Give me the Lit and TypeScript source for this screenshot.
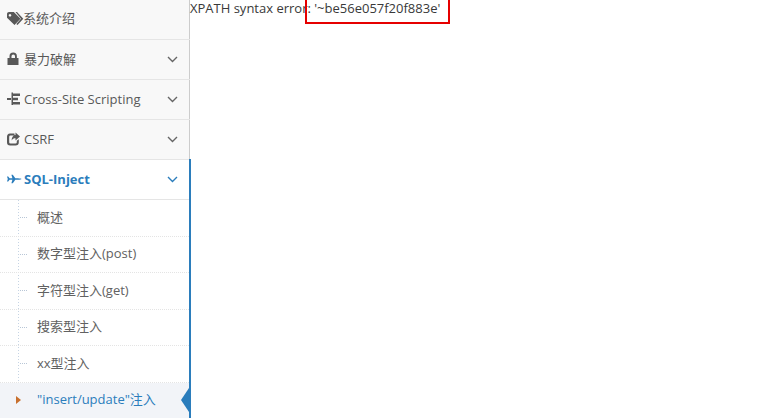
import { LitElement, html, css, svg } from "lit";
import { customElement } from "lit/decorators.js";

const icons: Record<string, unknown> = {
  tag: svg`<path d="M0 2C0 .9.9 0 2 0H6.800L13.500 6.800 7.500 13 0 5.800ZM3 2a1.300 1.300 0 1 0 .01 0Z" fill-rule="evenodd"/><path d="M8.500 0H10L16.300 6.800 10.500 13 9.300 12 14 6.800Z"/>`,
  lock: svg`<path d="M2.500 6V4.300a3.700 3.700 0 0 1 7.400 0V6h1.600V13H.5V6ZM4.500 6H8V4.300a1.750 1.750 0 0 0-3.500 0Z" fill-rule="evenodd"/>`,
  sitemap: svg`<path d="M0 6H4V8H0ZM4.500 .5H6V13H4.500ZM6 1.500H13V4H6ZM6 5.700H11V8.300H6ZM6 10H13V12.500H6Z"/>`,
  share: svg`<path d="M3 1.500H7.500V3.500H3.500A1.300 1.300 0 0 0 2.200 4.800V10.200A1.300 1.300 0 0 0 3.500 11.500H8.500A1.300 1.300 0 0 0 9.800 10.200V8.800L11.800 7.200V10.200A3.300 3.300 0 0 1 8.500 13.500H3.500A3.300 3.300 0 0 1 0 10.200V4.800A3.300 3.300 0 0 1 3 1.500ZM8.500 .5L13 4.500 8.500 8.500V6.300C6.800 6.300 5.500 6.800 4.600 8.500 4.600 5.500 6 3.200 8.500 2.900Z"/>`,
  jet: svg`<path d="M0 4.500H1.200L2.600 6.200H5.400L4.400 2.800H5.800L8.300 6.200H11C12.800 6.300 14.500 6.800 14.500 7S12.800 7.700 11 7.800H8.300L5.800 11.200H4.400L5.400 7.800H2.600L1.200 9.500H0L.8 7Z"/>`,
};

const chevron = html`<svg class="chev" viewBox="0 0 11 7" width="11" height="7"><path d="M1 1l4.500 4.500L10 1" fill="none" stroke="currentColor" stroke-width="1.400"/></svg>`;

const tops = [
  { icon: "tag", label: "系统介绍", chev: false, cls: "up2" },
  { icon: "lock", label: "暴力破解", chev: true, cls: "up1" },
  { icon: "sitemap", label: "Cross-Site Scripting", chev: true, cls: "" },
  { icon: "share", label: "CSRF", chev: true, cls: "" },
];
const subs = ["概述", "数字型注入(post)", "字符型注入(get)", "搜索型注入", "xx型注入"];

@customElement("app-root")
export class AppRoot extends LitElement {
  static styles = css`
    :host {
      display: flex;
      width: 779px;
      height: 418px;
      overflow: hidden;
      background: #fff;
      font-family: "Open Sans", "Noto Sans CJK SC", sans-serif;
      font-size: 13px;
      color: #393939;
    }
    .side {
      width: 190px;
      flex: none;
      height: 418px;
      box-sizing: border-box;
      background: #f8f8f8;
      border-right: 1px solid #ccc;
      display: flex;
      flex-direction: column;
    }
    .row {
      display: flex;
      align-items: center;
      box-sizing: border-box;
      height: 40px;
      flex: none;
      padding: 0 12px 1px 7px;
      color: #585858;
      border-bottom: 1px solid #e5e5e5;
      margin-right: -1px;
    }
    .ico { width: 17px; height: 14px; flex: none; fill: #585858; overflow: visible; }
    .row .label { flex: 1; white-space: nowrap; }
    .label.up1 { padding-bottom: 2px; }
    .label.up2 { padding-bottom: 4px; margin-left: -1px; }
    .chev { color: #666; flex: none; }
    .row.open {
      position: relative;
      background: #fff;
      color: #2b7dbc;
      font-weight: 700;
      margin-right: -2px;
      padding-right: 13px;
    }
    .row.open::after {
      content: "";
      position: absolute;
      right: 0;
      top: -1px;
      bottom: -1px;
      width: 2px;
      background: #2b7dbc;
    }
    .row.open .ico { fill: #2b7dbc; }
    .row.open .chev { color: #2b7dbc; }
    .subs {
      flex: 1;
      background-color: #fff;
      margin-right: -2px;
      border-right: 2px solid #2b7dbc;
      position: relative;
      background-image: linear-gradient(#c6d4e4 50%, transparent 50%);
      background-size: 1px 3px;
      background-repeat: repeat-y;
      background-position: 18px 0;
    }
    .sub {
      position: relative;
      height: 36.5px;
      box-sizing: border-box;
      display: flex;
      align-items: center;
      padding: 0 0 3px 37px;
      color: #616161;
      white-space: nowrap;
      border-bottom: 1px dotted #e4e4e4;
    }
    .sub::before {
      content: "";
      position: absolute;
      left: 20px;
      top: 17px;
      width: 7px;
      border-top: 1px dotted #b8c6d6;
    }
    .sub.active {
      background: #f2f4f8;
      color: #2b7dbc;
      border-bottom: none;
      padding-bottom: 5px;
    }
    .sub.active::before {
      left: 16px;
      top: 13px;
      width: 0;
      border-top: 4px solid transparent;
      border-bottom: 4px solid transparent;
      border-left: 5px solid #c8702e;
    }
    .sub.active::after {
      content: "";
      position: absolute;
      right: 0;
      top: 5px;
      border-top: 12px solid transparent;
      border-bottom: 12px solid transparent;
      border-right: 8px solid #2b7dbc;
    }
    .main {
      position: relative;
      flex: 1;
      line-height: 17px;
      white-space: nowrap;
      font-size: 13px;
      color: #393939;
    }
    .main p { margin: 0; }
    .mark {
      position: absolute;
      left: 115px;
      top: -2px;
      width: 145px;
      height: 26px;
      box-sizing: border-box;
      border: 2px solid #e60000;
    }
  `;

  render() {
    return html`
      <nav class="side">
        ${tops.map(
          (t) => html`<div class="row">
            <svg class="ico" viewBox="0 0 17 14">${icons[t.icon]}</svg>
            <span class="label ${t.cls}">${t.label}</span>
            ${t.chev ? chevron : ""}
          </div>`
        )}
        <div class="row open">
          <svg class="ico" viewBox="0 0 17 14">${icons.jet}</svg>
          <span class="label">SQL-Inject</span>
          ${chevron}
        </div>
        <div class="subs">
          ${subs.map((s) => html`<div class="sub">${s}</div>`)}
          <div class="sub active">"insert/update"注入</div>
        </div>
      </nav>
      <main class="main">
        <p>XPATH syntax error: '~be56e057f20f883e'</p>
        <div class="mark"></div>
      </main>
    `;
  }
}
